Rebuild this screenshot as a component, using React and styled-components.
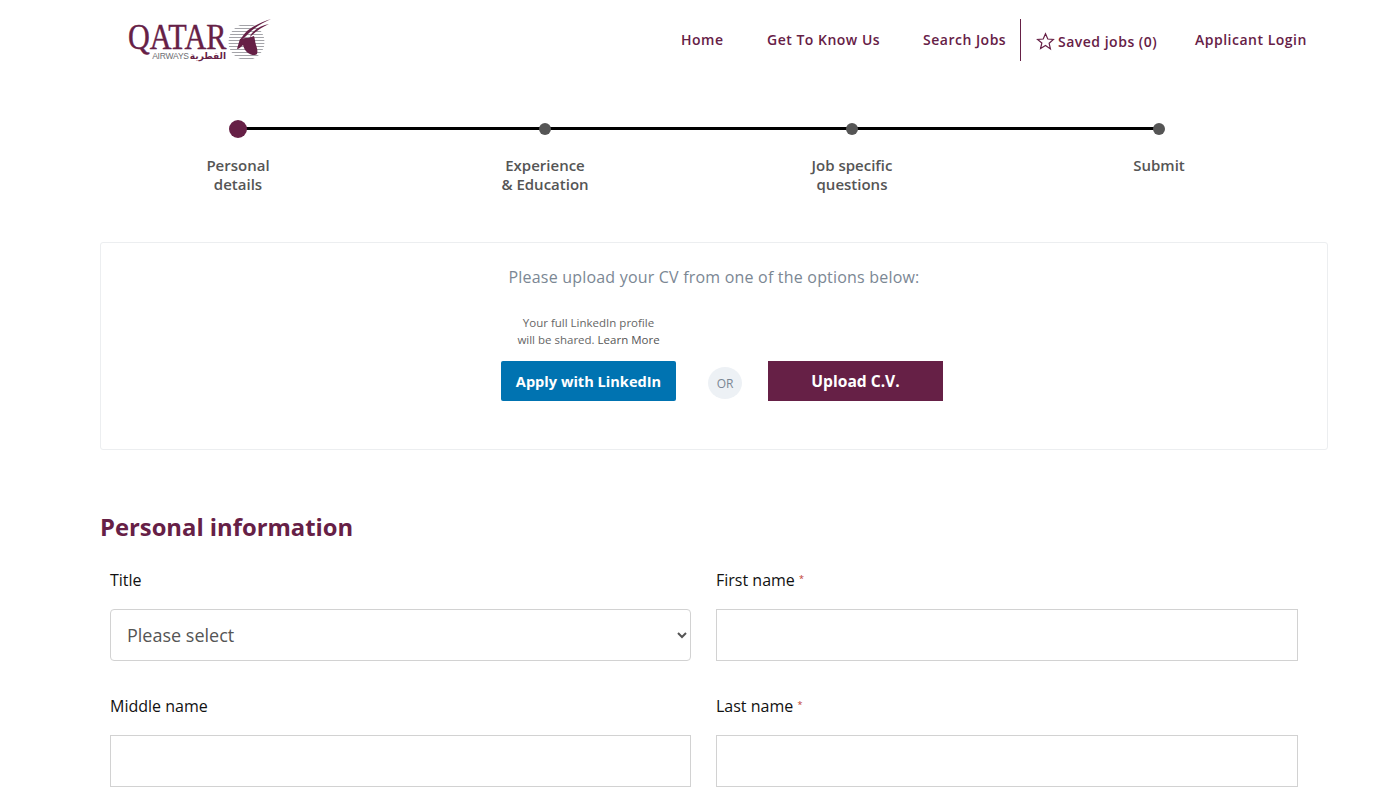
import React from "react";
import styled, { createGlobalStyle } from "styled-components";

const maroon = "#662046";

const GlobalStyle = createGlobalStyle`
  html, body { margin: 0; padding: 0; background: #fff; }
  body { font-family: "Open Sans", "Noto Sans", sans-serif; color: #111; }
  * { box-sizing: border-box; }
`;

const Page = () => {
  return (
    <Wrap>
      <GlobalStyle />
      <Header>
        <Logo>
          <LogoWords>
            <LogoName>QATAR</LogoName>
            <LogoSub>
              <span>AIRWAYS</span>
              <LogoArabic>القطرية</LogoArabic>
            </LogoSub>
          </LogoWords>
          <Oryx />
        </Logo>
        <Nav>
          <NavLink $width={86}>Home</NavLink>
          <NavLink $width={156}>Get To Know Us</NavLink>
          <NavLink $width={97}>Search Jobs</NavLink>
          <Saved>
            <StarIcon />
            <SavedText>Saved jobs (0)</SavedText>
          </Saved>
          <NavLink $width={112}>Applicant Login</NavLink>
        </Nav>
      </Header>

      <Stepper>
        <Step $line>
          <DotRow><Dot $active /></DotRow>
          <StepLabel>Personal<br />details</StepLabel>
        </Step>
        <Step $line>
          <DotRow><Dot /></DotRow>
          <StepLabel>Experience<br />&amp; Education</StepLabel>
        </Step>
        <Step $line>
          <DotRow><Dot /></DotRow>
          <StepLabel>Job specific<br />questions</StepLabel>
        </Step>
        <Step>
          <DotRow><Dot /></DotRow>
          <StepLabel>Submit</StepLabel>
        </Step>
      </Stepper>

      <UploadCard>
        <UploadTitle>Please upload your CV from one of the options below:</UploadTitle>
        <Options>
          <LinkedInCol>
            <Hint>Your full LinkedIn profile<br />will be shared. <HintLink>Learn More</HintLink></Hint>
            <ActionButton $bg="#0073b1" $radius={2} $size={14.6}>Apply with LinkedIn</ActionButton>
          </LinkedInCol>
          <OrBadge>OR</OrBadge>
          <ActionButton $bg={maroon} $size={15.6}>Upload C.V.</ActionButton>
        </Options>
      </UploadCard>

      <SectionTitle>Personal information</SectionTitle>

      <FormGrid>
        <Field>
          <Label>Title</Label>
          <Select defaultValue="">
            <option value="">Please select</option>
            <option>Mr</option>
            <option>Mrs</option>
            <option>Ms</option>
          </Select>
        </Field>
        <Field>
          <Label>First name <Required>*</Required></Label>
          <Input />
        </Field>
        <Field>
          <Label>Middle name</Label>
          <Input />
        </Field>
        <Field>
          <Label>Last name <Required>*</Required></Label>
          <Input />
        </Field>
      </FormGrid>
    </Wrap>
  );
};

const StarIcon = () => (
  <svg width="19" height="19" viewBox="0 0 24 24" fill="none" stroke={maroon} strokeWidth="1.5" strokeLinejoin="miter">
    <path d="M12 2.2l2.9 6.6 7.1.7-5.4 4.8 1.6 7.1L12 17l-6.2 3.9 1.6-7.1L2 9.5l7.1-.7z" />
  </svg>
);

// tail feathers, head and the grey striped disc behind it
const Oryx = () => (
  <svg width="46" height="46" viewBox="0 0 46 46">
    <defs>
      <clipPath id="disc">
        <circle cx="20.5" cy="24" r="18" />
      </clipPath>
    </defs>
    <g stroke="#a3a3a8" strokeWidth="1.1" clipPath="url(#disc)">
      <path d="M2 7.5h38M2 10.5h38M2 13.5h38M2 16.5h38M2 19.5h38M2 22.5h38M2 25.5h38M2 28.5h38M2 31.5h38M2 34.5h38M2 37.5h38M2 40.5h38" />
    </g>
    <path d="M45 1C36 4 27 8 21 13c-3 3-5 6-7 9 3-1 6-4 8-6 6-6 14-11 23-15z" fill={maroon} />
    <path d="M43 6c-6 1-12 4-16 8-2 2-3 4-3 5 4-4 10-9 19-13z" fill={maroon} />
    <path d="M14 21c-1 3-2 6-3 10 2 0 4-2 6-4 1 3 2 6 5 8 3 2 7 3 9 1 1-3 0-6-1-9-1-3-1-6-2-9-2 1-4 1-6 2-3 0-6 0-8 1z" fill={maroon} />
  </svg>
);

const Wrap = styled.div`
  width: 1394px;
  padding-bottom: 20px;
`;

const Header = styled.header`
  height: 80px;
  display: flex;
  justify-content: space-between;
  padding: 19px 87px 0 128px;
`;

const Logo = styled.div`
  display: flex;
  align-items: flex-start;
  height: 44px;
  margin-top: -1px;
`;

const LogoWords = styled.div`
  display: flex;
  flex-direction: column;
  align-items: flex-end;
  width: 98px;
  color: ${maroon};
  margin-top: 7px;
`;

const LogoName = styled.div`
  align-self: flex-start;
  font-family: "Liberation Serif", serif;
  font-size: 36px;
  line-height: 24px;
  -webkit-text-stroke: 0.4px ${maroon};
  transform: scaleX(0.84);
  transform-origin: left center;
`;

const LogoSub = styled.div`
  display: flex;
  gap: 1px;
  align-items: center;
  margin-top: 3px;
  font-family: "Liberation Sans", sans-serif;
  font-size: 8.5px;
  line-height: 9px;
  span { color: #6d6d72; letter-spacing: -0.2px; }
`;

const LogoArabic = styled.b`
  font-family: "DejaVu Sans", sans-serif;
  font-size: 9px;
  color: ${maroon};
`;

const Nav = styled.nav`
  display: flex;
  align-items: flex-start;
  height: 42px;
`;

const NavLink = styled.a`
  display: block;
  width: ${(p) => p.$width}px;
  margin-top: 11px;
  font-size: 14px;
  line-height: 20px;
  font-weight: 600;
  letter-spacing: 0.5px;
  color: ${maroon};
  white-space: nowrap;
`;

const Saved = styled.div`
  display: flex;
  align-items: center;
  gap: 3px;
  width: 175px;
  height: 42px;
  padding: 3px 0 0 15px;
  border-left: 1px solid ${maroon};
`;

const SavedText = styled.span`
  font-size: 14px;
  font-weight: 600;
  letter-spacing: 0.5px;
  color: ${maroon};
  white-space: nowrap;
`;

const Stepper = styled.div`
  display: grid;
  grid-template-columns: repeat(4, 307px);
  margin: 29px 0 0 84.5px;
  height: 133px;
`;

const Step = styled.div`
  position: relative;
  display: flex;
  flex-direction: column;
  align-items: center;

  /* line between two steps, runs under the dots */
  ${(p) =>
    p.$line &&
    `&::after {
      content: "";
      position: absolute;
      left: 50%;
      top: 18px;
      width: 307px;
      height: 3px;
      background: #000;
    }`}
`;

const DotRow = styled.div`
  height: 39px;
  display: flex;
  align-items: center;
  position: relative;
  z-index: 1;
`;

const Dot = styled.span`
  display: block;
  width: ${(p) => (p.$active ? 18 : 12)}px;
  height: ${(p) => (p.$active ? 18 : 12)}px;
  border-radius: 50%;
  background: ${(p) => (p.$active ? maroon : "#555")};
`;

const StepLabel = styled.div`
  margin-top: 8px;
  font-size: 15px;
  line-height: 19px;
  font-weight: 600;
  color: #555;
  text-align: center;
`;

const UploadCard = styled.section`
  margin: 0 66px 0 100px;
  width: 1228px;
  height: 208px;
  border: 1px solid #eceef0;
  border-radius: 3px;
  padding-top: 22px;
`;

const UploadTitle = styled.h3`
  margin: 0;
  font-size: 16px;
  line-height: 24px;
  font-weight: 400;
  letter-spacing: 0.2px;
  color: #7b8794;
  text-align: center;
`;

const Options = styled.div`
  display: flex;
  align-items: flex-end;
  margin: 25px 0 0 400px;
`;

const LinkedInCol = styled.div`
  display: flex;
  flex-direction: column;
  align-items: center;
`;

const Hint = styled.p`
  margin: 0 0 13px;
  font-size: 11.5px;
  line-height: 17px;
  color: #666;
  text-align: center;
`;

const HintLink = styled.a`
  color: #555;
`;

const ActionButton = styled.button`
  width: 175px;
  height: 40px;
  border: 0;
  border-radius: ${(p) => p.$radius || 0}px;
  background: ${(p) => p.$bg};
  color: #fff;
  font-family: inherit;
  font-size: ${(p) => p.$size}px;
  font-weight: 700;
`;

const OrBadge = styled.span`
  display: flex;
  align-items: center;
  justify-content: center;
  width: 34px;
  height: 32px;
  margin: 0 26px 2px 32px;
  border-radius: 50%;
  background: #edf1f5;
  color: #7b8794;
  font-size: 12px;
`;

const SectionTitle = styled.h2`
  margin: 60px 0 0 100px;
  font-size: 23.8px;
  line-height: 34px;
  font-weight: 700;
  color: ${maroon};
`;

const FormGrid = styled.div`
  display: grid;
  grid-template-columns: 581px 582px;
  column-gap: 25px;
  row-gap: 33px;
  margin: 24px 0 0 110px;
`;

const Field = styled.div`
  display: flex;
  flex-direction: column;
`;

const Label = styled.label`
  height: 41px;
  padding-top: 1px;
  font-size: 16px;
  line-height: 22px;
  color: #111;
`;

const Required = styled.span`
  display: inline-block;
  vertical-align: 4px;
  color: #c0392b;
  font-size: 9px;
  line-height: 0;
`;

const Select = styled.select`
  height: 52px;
  padding: 0 12px;
  border: 1px solid #d2d2d2;
  border-radius: 4px;
  background: #fff;
  font-family: inherit;
  font-size: 18px;
  color: #555;
`;

const Input = styled.input`
  height: 52px;
  border: 1px solid #d2d2d2;
  border-radius: 0;
  background: #fff;
`;

export default Page;
